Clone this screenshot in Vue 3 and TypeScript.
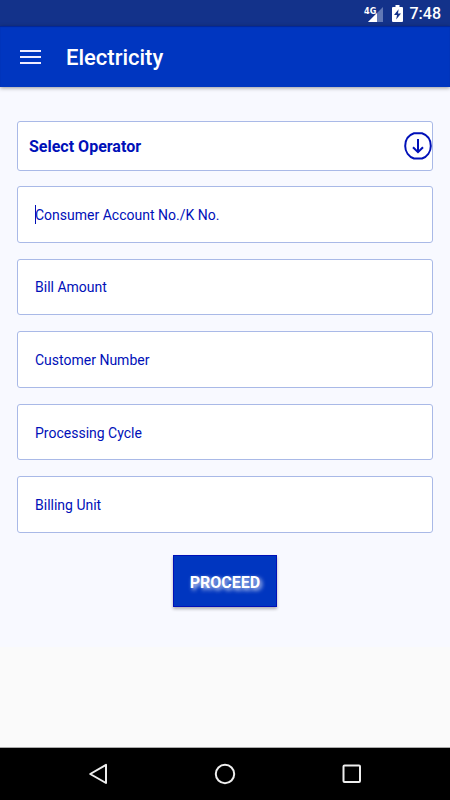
<script setup lang="ts">
import { reactive, ref } from 'vue'

interface Field {
  id: string
  label: string
}

const fields: Field[] = [
  { id: 'account', label: 'Consumer Account No./K No.' },
  { id: 'amount', label: 'Bill Amount' },
  { id: 'customer', label: 'Customer Number' },
  { id: 'cycle', label: 'Processing Cycle' },
  { id: 'unit', label: 'Billing Unit' },
]

const operator = ref('')
const active = ref('account')
const values = reactive<Record<string, string>>({
  account: '',
  amount: '',
  customer: '',
  cycle: '',
  unit: '',
})
</script>

<template>
  <div class="screen">
    <div class="status">
      <svg class="signal" width="20" height="18" viewBox="0 0 20 18" aria-hidden="true">
        <path d="M20 3V18H5Z" fill="#6178b5" />
        <path d="M14 9V18H5Z" fill="#fff" />
        <text class="network" x="1" y="10">4G</text>
      </svg>
      <svg class="battery" width="11" height="17" viewBox="0 0 11 17" aria-hidden="true">
        <path d="M3.5 0H7.5V2H10Q11 2 11 3V16Q11 17 10 17H1Q0 17 0 16V3Q0 2 1 2H3.5Z" fill="#fff" />
        <path d="M6.6 4.2L2 10H5L4.2 14.4L9 8.6H6Z" fill="#13328a" />
      </svg>
      <span class="clock">7:48</span>
    </div>

    <header class="bar">
      <button class="menu" type="button" aria-label="Menu">
        <svg width="21" height="16" viewBox="0 0 21 16" aria-hidden="true">
          <path d="M0 2H21M0 8H21M0 14H21" stroke="#f0edff" stroke-width="2" />
        </svg>
      </button>
      <h1 class="title">Electricity</h1>
    </header>

    <main class="content">
      <form class="form" @submit.prevent>
        <div class="operator">
          <select v-model="operator" class="box select" aria-label="Select Operator">
            <option value="">Select Operator</option>
          </select>
          <svg class="arrow" width="28" height="28" viewBox="0 0 28 28" aria-hidden="true">
            <g fill="none" stroke="#0010b8" stroke-width="2">
              <path d="M10 1.3H18C23 3 26.8 7.5 26.8 14C26.8 20 23 24.7 18 26.5H10C5 24.7 1.2 20 1.2 14C1.2 7.5 5 3 10 1.3Z" stroke-linejoin="round" />
              <path d="M14 7V20M9 15.2L14 20.2L19 15.2" />
            </g>
          </svg>
        </div>

        <div class="fields">
          <div v-for="field in fields" :key="field.id" class="field" :class="{ active: active === field.id && !values[field.id] }">
            <input
              :id="field.id"
              v-model="values[field.id]"
              class="box input"
              type="text"
              :placeholder="field.label"
              :aria-label="field.label"
              @focus="active = field.id"
            />
          </div>
        </div>

        <button class="proceed" type="submit">PROCEED</button>
      </form>
    </main>

    <nav class="nav" aria-label="System">
      <button class="key" type="button" aria-label="Back">
        <svg width="22" height="22" viewBox="0 0 22 22" aria-hidden="true">
          <path d="M19 1.8V20L3.2 11Z" fill="none" stroke="#eee" stroke-width="2" stroke-linejoin="round" />
        </svg>
      </button>
      <button class="key" type="button" aria-label="Home">
        <svg width="22" height="22" viewBox="0 0 22 22" aria-hidden="true">
          <circle cx="11" cy="11" r="9.2" fill="none" stroke="#eee" stroke-width="2" />
        </svg>
      </button>
      <button class="key" type="button" aria-label="Recent apps">
        <svg width="22" height="22" viewBox="0 0 22 22" aria-hidden="true">
          <rect x="2.5" y="2.5" width="16.5" height="16.5" rx="1" fill="none" stroke="#eee" stroke-width="2" />
        </svg>
      </button>
    </nav>
  </div>
</template>

<style>
body {
  margin: 0;
  background: #fafafa;
}
</style>

<style scoped>
.screen {
  display: flex;
  flex-direction: column;
  min-height: 100vh;
  background: #fafafa;
  font-family: Roboto, "Liberation Sans", sans-serif;
}

.status {
  display: flex;
  align-items: center;
  justify-content: flex-end;
  box-sizing: border-box;
  height: 26px;
  padding-right: 9px;
  background: #13328a;
  color: #fff;
}

.signal {
  margin-right: 9px;
  overflow: visible;
}

.network {
  fill: #fff;
  font-family: "Liberation Sans Narrow", "DejaVu Sans Condensed", sans-serif;
  font-size: 9px;
  font-weight: 700;
}

.battery {
  margin-right: 7px;
}

.clock {
  padding-top: 2px;
  font-size: 16px;
  font-weight: 500;
  line-height: 24px;
}

.bar {
  position: relative;
  display: flex;
  align-items: center;
  gap: 25px;
  height: 61px;
  padding: 0 20px;
  background: #0036c0;
  box-shadow: 0 1px 4px rgba(0, 0, 0, 0.4), inset 0 1px 1px rgba(0, 0, 60, 0.3);
}

.menu {
  display: flex;
  padding: 0;
  border: 0;
  background: none;
}

.title {
  margin: 0;
  padding-top: 2px;
  color: #fff;
  font-size: 22px;
  font-weight: 500;
  line-height: 30px;
}

.content {
  padding: 34px 17px 40px;
  background: #f8f9ff;
}

.form {
  display: flex;
  flex-direction: column;
}

.operator {
  position: relative;
  height: 50px;
  margin-bottom: 15px;
}

.box {
  display: block;
  box-sizing: border-box;
  width: 100%;
  height: 100%;
  margin: 0;
  border: 1px solid #a9b9e7;
  border-radius: 3px;
  outline: 0;
  background: #fff;
  color: #0010b8;
  font-family: inherit;
}

.select {
  appearance: none;
  padding: 0 40px 0 11px;
  font-size: 16px;
  font-weight: 700;
}

.arrow {
  position: absolute;
  top: 11px;
  right: 1px;
  pointer-events: none;
}

.fields {
  display: grid;
  grid-auto-rows: 1fr;
  gap: 16px;
  min-height: 347px;
}

.field {
  position: relative;
}

.input {
  padding: 1px 17px 0;
  font-size: 14px;
}

.input::placeholder {
  color: #0010b8;
  opacity: 1;
}

.active .input {
  caret-color: transparent;
}

.active::before {
  content: "";
  position: absolute;
  top: 19px;
  left: 18px;
  width: 1px;
  height: 19px;
  background: #0010b8;
}

.proceed {
  align-self: center;
  height: 52px;
  margin-top: 22px;
  padding: 2px 16px 0;
  border: 1px solid #0010b8;
  background: #0036c0;
  box-shadow: 0 2px 3px rgba(0, 0, 0, 0.3);
  color: #fff;
  font-family: inherit;
  font-size: 16px;
  font-weight: 700;
  text-shadow: 2px 2px 4px rgba(255, 255, 255, 0.9);
}

.nav {
  display: flex;
  align-items: center;
  justify-content: space-between;
  box-sizing: border-box;
  height: 53px;
  margin-top: auto;
  padding: 0 87px;
  border-top: 1px solid #aaa;
  background: #000;
}

.key {
  display: flex;
  padding: 0;
  border: 0;
  background: none;
}
</style>
